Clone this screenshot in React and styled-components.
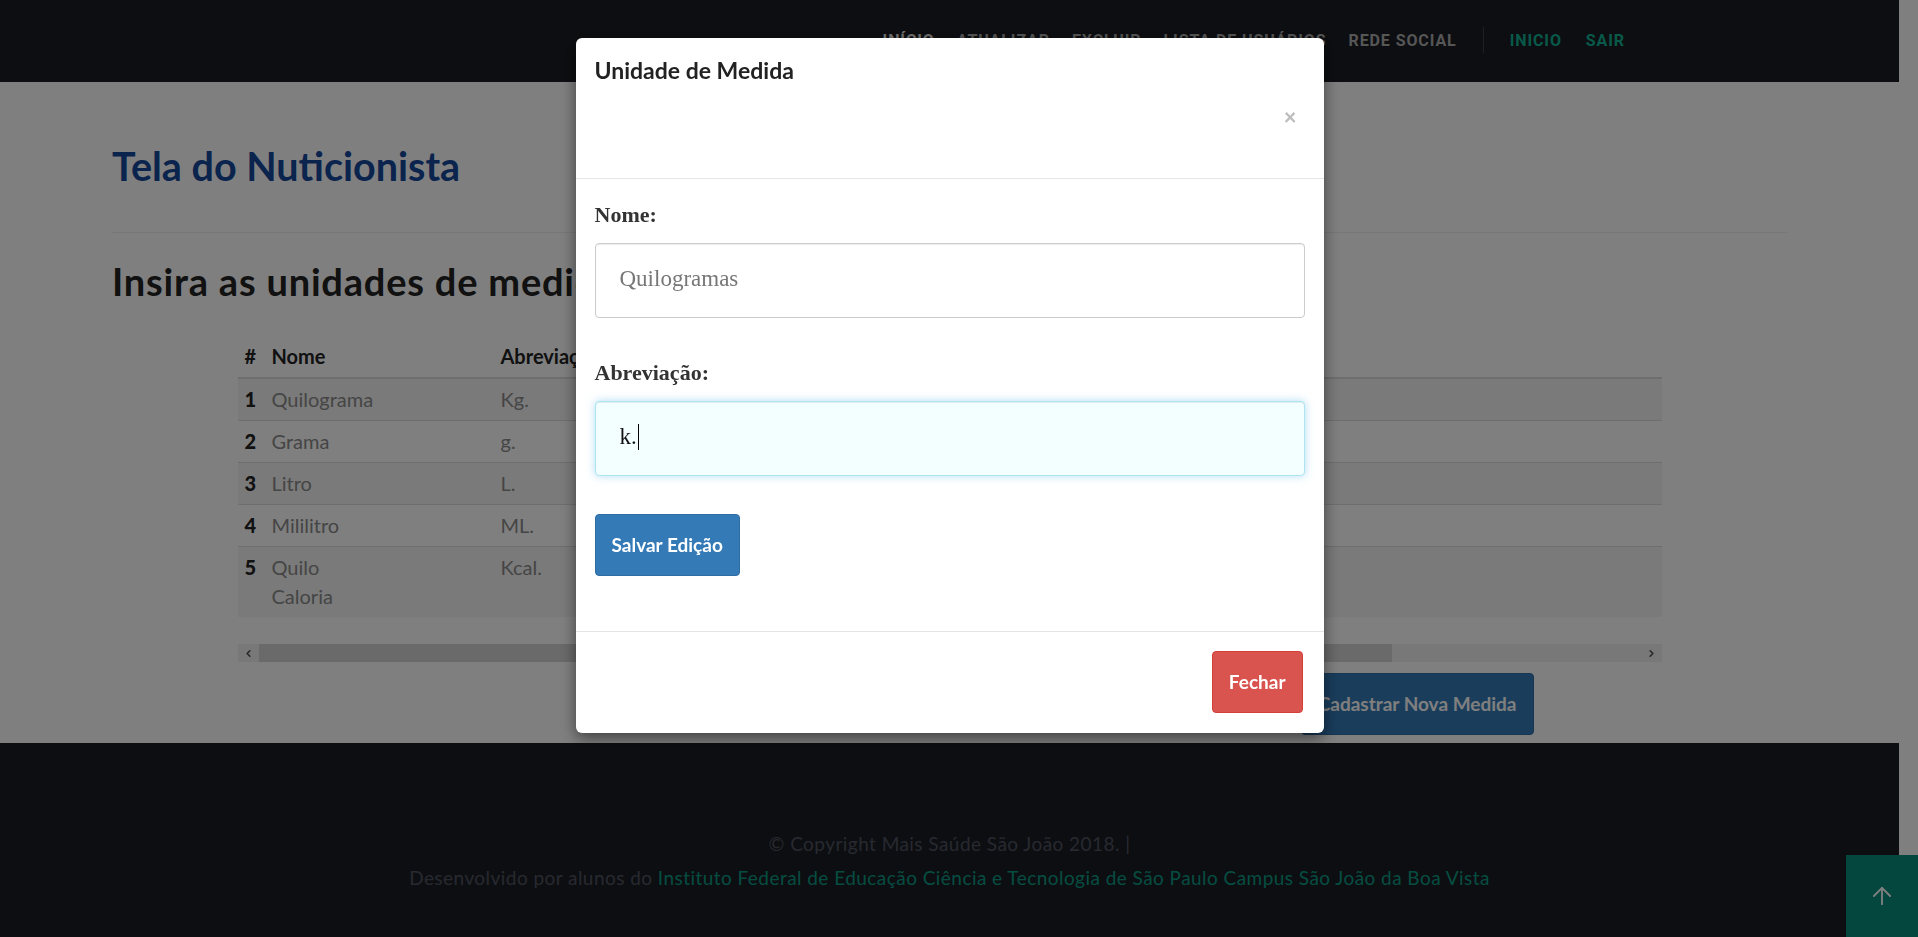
import React from 'react'
import styled, { createGlobalStyle } from 'styled-components'
import { ArrowUp, ChevronLeft, ChevronRight } from 'lucide-react'

const GlobalStyle = createGlobalStyle`
    html, body {
        margin: 0;
        padding: 0;
    }
    body {
        padding-right: 19px;
        background: #fff;
        font-family: Lato, "Open Sans", sans-serif;
        overflow: hidden;
    }
    * {
        box-sizing: border-box;
    }
`

const menu = [
    { label: 'INÍCIO', active: true },
    { label: 'ATUALIZAR' },
    { label: 'EXCLUIR' },
    { label: 'LISTA DE USUÁRIOS' },
    { label: 'REDE SOCIAL' },
]

const medidas = [
    { id: 1, nome: 'Quilograma', abrev: 'Kg.' },
    { id: 2, nome: 'Grama', abrev: 'g.' },
    { id: 3, nome: 'Litro', abrev: 'L.' },
    { id: 4, nome: 'Mililitro', abrev: 'ML.' },
    { id: 5, nome: ['Quilo', 'Caloria'], abrev: 'Kcal.' },
]

function App() {
    return (
        <>
            <GlobalStyle />
            <NavBar>
                {menu.map(item => (
                    <NavItem key={item.label} $active={item.active}>{item.label}</NavItem>
                ))}
                <NavDivider />
                <NavItem $accent>INICIO</NavItem>
                <NavItem $accent>SAIR</NavItem>
            </NavBar>

            <Main>
                <Title>Tela do Nuticionista</Title>
                <Rule />
                <Heading>Insira as unidades de medida</Heading>

                <TableWrap>
                    <Table>
                        <colgroup>
                            <col style={{ width: 26 }} />
                            <col style={{ width: 229 }} />
                            <col />
                        </colgroup>
                        <thead>
                            <tr>
                                <Th $first>#</Th>
                                <Th>Nome</Th>
                                <Th>Abreviação</Th>
                            </tr>
                        </thead>
                        <tbody>
                            {medidas.map(m => (
                                <Row key={m.id}>
                                    <NumCell>{m.id}</NumCell>
                                    <Td>
                                        {Array.isArray(m.nome)
                                            ? m.nome.map((part, i) => <NameLine key={i}>{part}</NameLine>)
                                            : m.nome}
                                    </Td>
                                    <Td>{m.abrev}</Td>
                                </Row>
                            ))}
                        </tbody>
                    </Table>
                    <ScrollTrack>
                        <ScrollArrow><ChevronLeft size={11} strokeWidth={3.5} /></ScrollArrow>
                        <ScrollBody>
                            <ScrollThumb $size={82} />
                        </ScrollBody>
                        <ScrollArrow><ChevronRight size={11} strokeWidth={3.5} /></ScrollArrow>
                    </ScrollTrack>
                    <Actions>
                        <Button>Cadastrar Nova Medida</Button>
                    </Actions>
                </TableWrap>
            </Main>

            <Footer>
                <FooterLine>© Copyright Mais Saúde São João 2018. |</FooterLine>
                <FooterLine>
                    Desenvolvido por alunos do{' '}
                    <FooterLink>Instituto Federal de Educação Ciência e Tecnologia de São Paulo Campus São João da Boa Vista</FooterLink>
                </FooterLine>
            </Footer>

            <BackToTop>
                <ArrowUp size={28} strokeWidth={1.6} />
            </BackToTop>

            <Overlay>
                <Dialog>
                    <DialogHeader>
                        <DialogTitle>Unidade de Medida</DialogTitle>
                        <Close>×</Close>
                    </DialogHeader>
                    <DialogBody>
                        <FormGroup $space={39}>
                            <Label>Nome:</Label>
                            <Field $placeholder>Quilogramas</Field>
                        </FormGroup>
                        <FormGroup $space={38}>
                            <Label>Abreviação:</Label>
                            <Field $focus>k.<Caret /></Field>
                        </FormGroup>
                        <Button>Salvar Edição</Button>
                    </DialogBody>
                    <DialogFooter>
                        <Button $variant="danger">Fechar</Button>
                    </DialogFooter>
                </Dialog>
            </Overlay>
        </>
    )
}

export default App

const NavBar = styled.header`
    height: 82px;
    background: #1b1d23;
    display: flex;
    align-items: center;
    justify-content: flex-end;
    padding: 0 262px 2px 0;
`
const NavItem = styled.a`
    padding: 0 ${p => p.$accent ? 12 : 11}px;
    font-family: Roboto, "Liberation Sans", sans-serif;
    font-weight: 700;
    font-size: 16px;
    letter-spacing: 0.9px;
    color: ${p => p.$accent ? '#10b294' : p.$active ? '#e4e4e4' : '#acacac'};
`
const NavDivider = styled.span`
    width: 1px;
    height: 26px;
    background: #3c3e46;
    margin: 0 14px 0 15px;
`

const Main = styled.main`
    background: #fff;
    padding: 62px 112px 8px;
`
const Title = styled.h1`
    margin: 0;
    font-size: 39.5px;
    line-height: 44px;
    font-weight: 700;
    color: #14489c;
`
const Rule = styled.hr`
    margin: 44px 0 27px;
    border: 0;
    border-top: 1px solid #eee;
`
const Heading = styled.h2`
    margin: 0 0 34px;
    font-size: 38px;
    line-height: 42px;
    font-weight: 700;
    letter-spacing: 0.8px;
    color: #222;
`

const TableWrap = styled.div`
    width: 1424px;
    margin: 0 auto;
`
const Table = styled.table`
    width: 100%;
    border-collapse: collapse;
    table-layout: fixed;
    margin-bottom: 27px;
    font-size: 20px;
    line-height: 29px;
`
const Th = styled.th`
    text-align: left;
    font-weight: 700;
    color: #222;
    padding: ${p => p.$first ? '6px 4px 6px 7px' : '6px 8px 6px'};
    border-bottom: 2px solid #ddd;
`
const Row = styled.tr`
    &:nth-child(odd) {
        background: #f5f5f5;
    }
`
const Td = styled.td`
    padding: 6px 8px;
    border-top: 1px solid #ddd;
    color: #8a8a8a;
    vertical-align: top;
`
const NumCell = styled(Td)`
    padding: 6px 4px 6px 7px;
    color: #222;
    font-weight: 900;
`
const NameLine = styled.span`
    display: block;
`
const ScrollTrack = styled.div`
    height: 18px;
    display: flex;
    background: #f1f1f1;
`
const ScrollArrow = styled.div`
    width: 21px;
    display: flex;
    align-items: center;
    justify-content: center;
    color: #505050;
`
const ScrollBody = styled.div`
    flex: 1;
    display: flex;
`
const ScrollThumb = styled.div`
    width: ${p => p.$size}%;
    background: #d4d4d4;
`
const Actions = styled.div`
    display: flex;
    justify-content: flex-end;
    padding-right: 128px;
    margin-top: 11px;
`
const Button = styled.button`
    font-family: Lato, "Open Sans", sans-serif;
    font-weight: 700;
    font-size: 19px;
    line-height: 26px;
    padding: 17px 16px;
    border-radius: 4px;
    color: #fff;
    cursor: pointer;
    background: ${p => p.$variant === 'danger' ? '#d9534f' : '#337ab7'};
    border: 1px solid ${p => p.$variant === 'danger' ? '#d43f3a' : '#2e6da4'};
`

const Footer = styled.footer`
    background: #1b1d23;
    min-height: 220px;
    padding-top: 84px;
    text-align: center;
    font-size: 19px;
    line-height: 34px;
    letter-spacing: 0.45px;
    color: #4f5360;
`
const FooterLine = styled.div``
const FooterLink = styled.a`
    color: #0b9a83;
`
const BackToTop = styled.a`
    position: fixed;
    right: 0;
    bottom: 0;
    width: 72px;
    height: 82px;
    background: #088e7c;
    color: #fff;
    display: flex;
    align-items: center;
    justify-content: center;
`

const Overlay = styled.div`
    position: fixed;
    inset: 0;
    padding-right: 19px;
    background: rgba(0, 0, 0, 0.5);
    z-index: 10;
`
const Dialog = styled.div`
    width: 748px;
    margin: 38px auto 0;
    background: #fff;
    border-radius: 6px;
    box-shadow: 0 5px 15px rgba(0, 0, 0, 0.5);
`
const DialogHeader = styled.div`
    display: flex;
    flex-direction: column;
    padding: 17px 19px 0;
    border-bottom: 1px solid #e5e5e5;
`
const DialogTitle = styled.h4`
    margin: 0;
    font-size: 23px;
    line-height: 31px;
    font-weight: 700;
    color: #222;
`
const Close = styled.span`
    align-self: flex-end;
    margin: 20px 8px 51px 0;
    font-family: Lato, sans-serif;
    font-size: 22px;
    line-height: 21px;
    font-weight: 900;
    color: #bdbdbd;
`
const DialogBody = styled.div`
    padding: 20px 19px 55px;
`
const FormGroup = styled.div`
    margin-bottom: ${p => p.$space}px;
`
const Label = styled.label`
    display: block;
    margin-bottom: 13px;
    font-family: "Liberation Serif", serif;
    font-weight: 700;
    font-size: 22px;
    line-height: 31px;
    color: #333;
`
const Field = styled.div`
    height: 75px;
    display: flex;
    align-items: center;
    padding: 0 24px 3px;
    border: 1px solid ${p => p.$focus ? '#aee3f2' : '#ccc'};
    border-radius: 4px;
    background: ${p => p.$focus ? '#f3feff' : '#fff'};
    box-shadow: ${p => p.$focus
        ? 'inset 0 1px 1px rgba(0,0,0,.075), 0 0 8px rgba(102, 190, 233, .5)'
        : 'inset 0 1px 1px rgba(0,0,0,.075)'};
    font-family: "Liberation Serif", serif;
    font-size: 23px;
    color: ${p => p.$placeholder ? '#777' : '#111'};
`
const Caret = styled.span`
    display: inline-block;
    width: 1px;
    height: 26px;
    margin-left: 1px;
    background: #000;
`
const DialogFooter = styled.div`
    display: flex;
    justify-content: flex-end;
    padding: 19px 21px 20px;
    border-top: 1px solid #e5e5e5;
`
